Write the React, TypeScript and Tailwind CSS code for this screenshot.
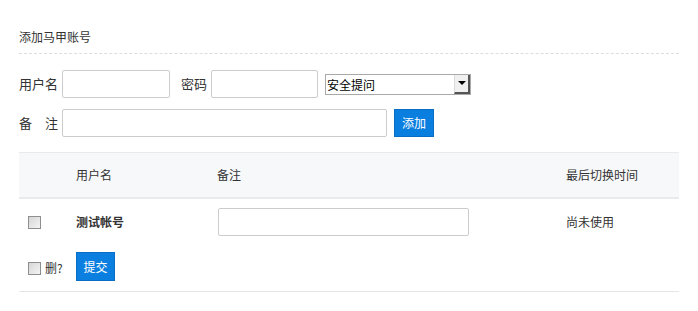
export default function App() {
  const font = "font-['Microsoft_YaHei','Noto_Sans_CJK_SC',sans-serif]";
  const box =
    "appearance-none w-[13px] h-[13px] m-0 border border-[#8e8e8e] bg-gradient-to-br from-[#d6d6d6] to-[#f4f4f4] rounded-none";
  return (
    <div className={`w-[698px] h-[311px] bg-white text-[#333] ${font}`}>
      <div className="pl-[19px] pr-[19px] pt-[28px]">
        <div className="text-[12px] leading-[18px] pb-[7px] border-b border-dashed border-[#dddddd]">
          添加马甲账号
        </div>

        {/* add form */}
        <div className="mt-[16px] flex items-center h-[28px] text-[13px]">
          <span className="w-[43px]">用户名</span>
          <input className="w-[108px] h-[28px] border border-[#cccccc] rounded-[2px] outline-none" />
          <span className="ml-[11px] w-[30px]">密码</span>
          <input className="w-[107px] h-[28px] border border-[#cccccc] rounded-[2px] outline-none" />
          <div className="ml-[7px] w-[146px] h-[21px] flex border border-[#a9a9a9] bg-white">
            <span className="flex-1 text-[12px] leading-[19px] pl-[1px] text-black">安全提问</span>
            <span className="w-[16px] h-full bg-[#f0f0f0] border-l border-[#dcdcdc] border-r-2 border-b-2 border-r-[#555] border-b-[#555] flex items-center justify-center">
              <span className="w-0 h-0 border-l-[4px] border-r-[4px] border-t-[4px] border-l-transparent border-r-transparent border-t-black" />
            </span>
          </div>
        </div>

        <div className="mt-[10px] flex items-center h-[29px] text-[13px]">
          <span className="w-[43px] whitespace-pre">备　注</span>
          <input className="w-[325px] h-[28px] border border-[#cccccc] rounded-[2px] outline-none" />
          <button className="ml-[7px] w-[40px] h-[28px] bg-[#0b7fe0] border border-[#0a6fc4] text-white text-[12px]">
            添加
          </button>
        </div>

        {/* list */}
        <div className="mt-[15px] text-[12px]">
          <div className="flex items-center h-[47px] bg-[#f7f8fa] border-t border-b-2 border-[#e8eaee]">
            <span className="w-[57px]" />
            <span className="w-[141px]">用户名</span>
            <span className="w-[349px]">备注</span>
            <span>最后切换时间</span>
          </div>
          <div className="flex items-center h-[46px]">
            <span className="w-[57px] pl-[9px] flex">
              <input type="checkbox" className={box} />
            </span>
            <span className="w-[142px] font-bold">测试帐号</span>
            <input className="w-[251px] h-[28px] border border-[#cccccc] rounded-[2px] outline-none" />
            <span className="ml-[97px]">尚未使用</span>
          </div>
          <div className="flex items-center h-[47px] border-b border-[#e5e5e5]">
            <span className="w-[57px] pl-[9px] flex items-center gap-[4px]">
              <input type="checkbox" className={box} />
              <span>删?</span>
            </span>
            <button className="w-[39px] h-[29px] bg-[#0b7fe0] border border-[#0a6fc4] text-white text-[12px] -mt-[3px]">
              提交
            </button>
          </div>
        </div>
      </div>
    </div>
  );
}
